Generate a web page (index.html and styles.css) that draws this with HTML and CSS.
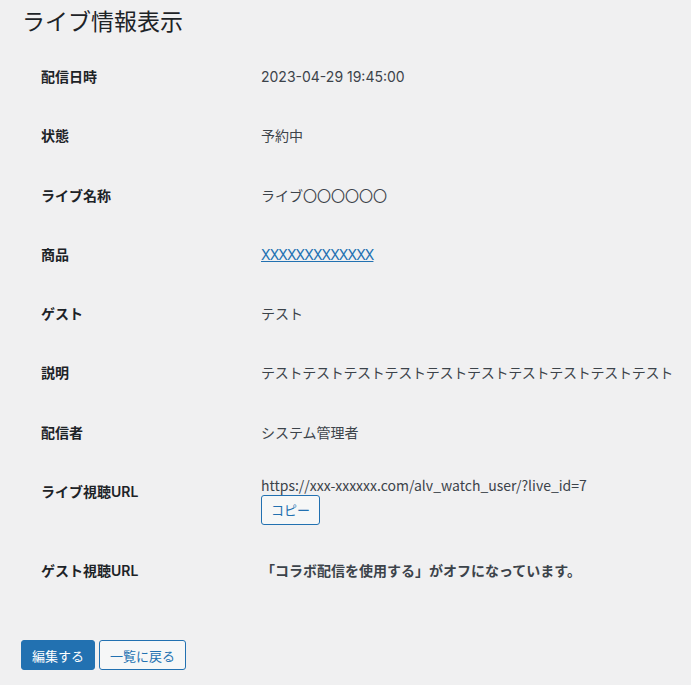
FILE: index.html
```html
<!DOCTYPE html>
<html lang="ja">
<head>
<meta charset="utf-8">
<title>ライブ情報表示</title>
<link rel="stylesheet" href="styles.css">
</head>
<body>
<div class="wrap">
  <h1 class="page-title">ライブ情報表示</h1>
  <table class="form-table">
    <colgroup><col class="col-label"><col></colgroup>
    <tbody>
      <tr><th>配信日時</th><td>2023-04-29 19:45:00</td></tr>
      <tr><th>状態</th><td>予約中</td></tr>
      <tr><th>ライブ名称</th><td>ライブ〇〇〇〇〇〇</td></tr>
      <tr><th>商品</th><td><a href="#" class="link">XXXXXXXXXXXXX</a></td></tr>
      <tr><th>ゲスト</th><td>テスト</td></tr>
      <tr><th>説明</th><td><span class="desc">テストテストテストテストテストテストテストテストテストテスト</span></td></tr>
      <tr><th>配信者</th><td>システム管理者</td></tr>
      <tr class="url-row"><th>ライブ視聴URL</th><td><div class="url">https://xxx-xxxxxx.com/alv_watch_user/?live_id=7</div><button class="button button-secondary button-copy" type="button">コピー</button></td></tr>
      <tr><th>ゲスト視聴URL</th><td><span class="notice">「コラボ配信を使用する」がオフになっています。</span></td></tr>
    </tbody>
  </table>
  <div class="actions">
    <button class="button button-primary" type="button">編集する</button>
    <button class="button button-secondary" type="button">一覧に戻る</button>
  </div>
</div>
</body>
</html>
```
FILE: styles.css
```css
html, body {
  margin: 0;
  padding: 0;
}
body {
  background: #f0f0f1;
  font-family: Inter, "Noto Sans CJK JP", sans-serif;
  font-size: 14px;
  color: #3c434a;
}
.wrap {
  padding: 0 20px 0 20px;
}
.page-title {
  font-size: 23px;
  font-weight: 400;
  line-height: 30px;
  margin: 0 0 0 2px;
  padding: 7px 0 0;
  color: #1d2327;
}
.form-table {
  border-collapse: collapse;
  table-layout: fixed;
  width: 100%;
  margin-top: 10px;
}
.col-label {
  width: 231px;
}
.form-table th {
  padding: 20px 10px 20px 21px;
  text-align: left;
  vertical-align: top;
  font-weight: 600;
  line-height: 19.25px;
  color: #1d2327;
  white-space: nowrap;
}
.form-table td {
  padding: 15px 10px;
  vertical-align: middle;
  line-height: 19.25px;
  color: #3c434a;
  white-space: nowrap;
}
.form-table .url-row td {
  padding-bottom: 16px;
}
.desc {
  letter-spacing: -0.27px;
}
.link {
  color: #2271b1;
  text-decoration: underline;
  letter-spacing: -0.9px;
}
.url {
  font-family: "Noto Sans CJK JP", sans-serif;
  line-height: 16px;
  margin-bottom: 2px;
}
.notice {
  font-weight: 600;
  color: #3c434a;
}
.button {
  display: inline-flex;
  align-items: center;
  justify-content: center;
  box-sizing: border-box;
  height: 30px;
  padding: 0 10px;
  font-family: Inter, "Noto Sans CJK JP", sans-serif;
  font-size: 13px;
  border-radius: 3px;
  border: 1px solid #2271b1;
  cursor: pointer;
}
.button-copy {
  padding: 0 9px;
}
.button-secondary {
  background: #f6f7f7;
  color: #2271b1;
}
.button-primary {
  background: #2271b1;
  color: #fff;
}
.actions {
  display: flex;
  gap: 4px;
  padding: 40px 0 0 1px;
}
```
